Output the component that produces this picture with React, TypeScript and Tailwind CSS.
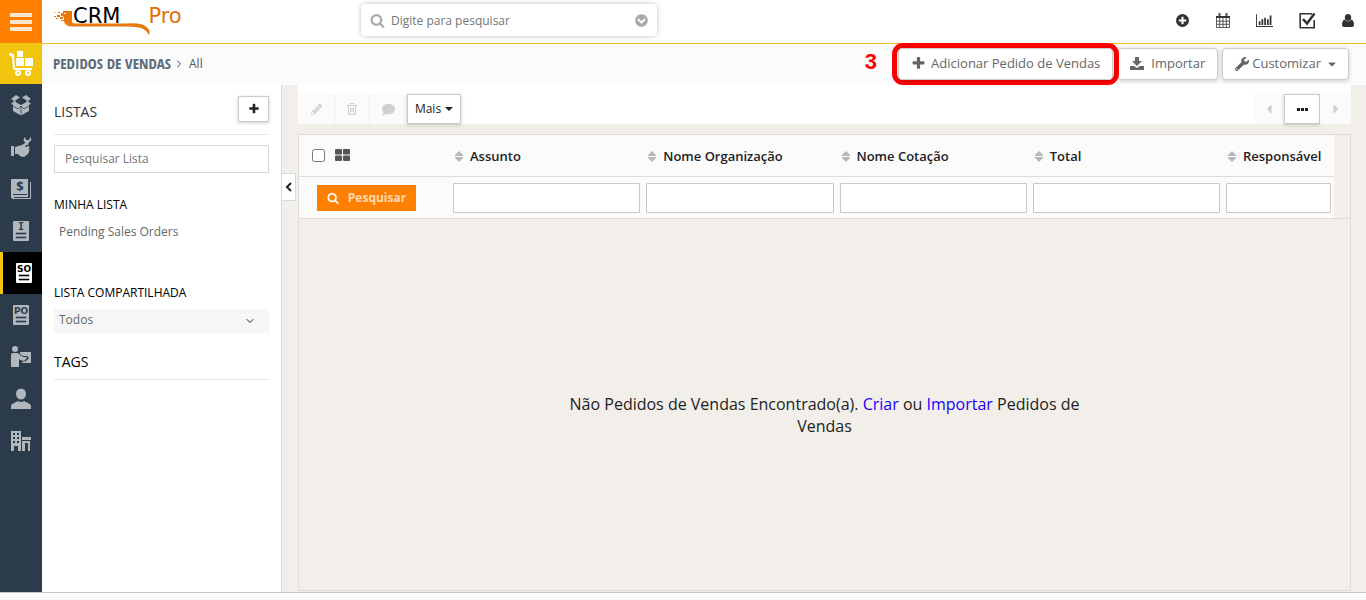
import type { ReactNode } from 'react';
import { FaChevronCircleDown, FaWrench, FaComment, FaPencilAlt, FaCaretLeft, FaCaretRight, FaCaretDown } from 'react-icons/fa';
import { ChevronDown, ChevronRight } from 'lucide-react';

const PLUS =
  'M1600 736v192q0 40-28 68t-68 28h-416v416q0 40-28 68t-68 28h-192q-40 0-68-28t-28-68v-416h-416q-40 0-68-28t-28-68v-192q0-40 28-68t68-28h416v-416q0-40 28-68t68-28h192q40 0 68 28t28 68v416h416q40 0 68 28t28 68z';
const PLUS_CIRCLE =
  'M1344 960v-128q0-26-19-45t-45-19h-256v-256q0-26-19-45t-45-19h-128q-26 0-45 19t-19 45v256h-256q-26 0-45 19t-19 45v128q0 26 19 45t45 19h256v256q0 26 19 45t45 19h128q26 0 45-19t19-45v-256h256q26 0 45-19t19-45zm320-64q0 209-103 385.5t-279.5 279.5-385.5 103-385.5-103-279.5-279.5-103-385.5 103-385.5 279.5-279.5 385.5-103 385.5 103 279.5 279.5 103 385.5z';
const SEARCH =
  'M1216 832q0-185-131.5-316.5t-316.5-131.5-316.5 131.5-131.5 316.5 131.5 316.5 316.5 131.5 316.5-131.5 131.5-316.5zm512 832q0 52-38 90t-90 38q-54 0-90-38l-343-342q-179 124-399 124-143 0-273.5-55.5t-225-150-150-225-55.5-273.5 55.5-273.5 150-225 225-150 273.5-55.5 273.5 55.5 225 150 150 225 55.5 273.5q0 220-124 399l343 343q37 37 37 90z';

function Glyph({ d, className }: { d: string; className: string }) {
  return (
    <svg viewBox="0 0 1792 1792" className={className} fill="currentColor" aria-hidden="true">
      <path d={d} />
    </svg>
  );
}

function Logo() {
  return (
    <svg width="140" height="30" viewBox="0 0 140 30" aria-hidden="true">
      <g fill="#e8780c">
        <path d="M12 3h6v10q0 2.500 3 2.500h52q17-1 21 5q2.500 3 1 6.500q-3-6-10-7.500q-8-1.500-20-1H19q-9 0-9-6V9h-1V6h3z" />
        <rect x="9" y="3" width="3" height="2" />
        <rect x="7" y="5" width="3" height="3" />
        <rect x="4" y="4" width="2" height="1" />
        <rect x="0" y="4" width="1" height="1" />
        <rect x="3" y="7" width="3" height="2" />
        <rect x="0" y="8" width="2" height="1" />
        <rect x="6" y="9" width="3" height="2" />
        <rect x="2" y="10" width="2" height="1" />
        <rect x="7" y="12" width="4" height="1" />
      </g>
    </svg>
  );
}

function CartIcon() {
  return (
    <svg width="26" height="26" viewBox="0 0 26 26" fill="#fff" aria-hidden="true">
      <path d="M1 3q0-2 2-1l2 1q1 0 1 1l1 13h17v2H7q-2 0-2-2L4 6L2 5Q1 4 1 3z" />
      <rect x="9" y="0" width="6" height="6" />
      <rect x="8" y="7" width="8" height="8" />
      <rect x="17" y="7" width="8" height="8" />
      <circle cx="10" cy="22" r="3" />
      <circle cx="20" cy="22" r="3" />
      <circle cx="10" cy="22" r="1" fill="#f1c40f" />
      <circle cx="20" cy="22" r="1" fill="#f1c40f" />
    </svg>
  );
}

function SideSvg({ children }: { children: ReactNode }) {
  return (
    <svg width="22" height="22" viewBox="0 0 22 22" fill="#b0b7bd" aria-hidden="true">
      {children}
    </svg>
  );
}

function DocIcon({ letters, active }: { letters: string; active?: boolean }) {
  const ink = active ? '#000' : '#2c3b49';
  return (
    <SideSvg>
      <rect x="3" y="1" width="16" height="20" rx="1" fill={active ? '#fff' : '#b0b7bd'} />
      <text
        x="11"
        y="10"
        textAnchor="middle"
        fontSize={letters.length > 1 ? 9 : 10}
        fontWeight="700"
        className={letters.length > 1 ? "font-['DejaVu_Sans',sans-serif]" : "font-['DejaVu_Sans_Mono',monospace]"}
        fill={ink}
      >
        {letters}
      </text>
      <path d="M6 13h10v1H6zM6 17h10v1H6z" fill={ink} stroke={ink} strokeWidth=".6" />
    </SideSvg>
  );
}

const modules: { name: string; active?: boolean; icon: ReactNode }[] = [
  {
    name: 'Produtos',
    icon: (
      <SideSvg>
        <path d="M6 1l4 2.500L4.500 7 1 5zM16 1l-4 2.500L17.500 7 21 5z" />
        <path d="M1 9.500L4.500 7.500 11 11l6.500-3.500L21 9.500 19 11v6l-8 4.500L3 17v-6z" />
        <path d="M3 12l5 3 3-3 3 3 5-3M11 12v9" stroke="#2c3b49" strokeWidth=".7" fill="none" />
        <path d="M3.500 6.500h2v2h-2zM16.500 6.500h2v2h-2z" />
      </SideSvg>
    ),
  },
  {
    name: 'Serviços',
    icon: (
      <SideSvg>
        <rect x="1" y="10" width="3" height="10" />
        <path d="M5 11l7-2 3-2q2 0 1 2l-1 2 4-1q1 5-1 8l-4 3q-4 0-6-3H5z" />
        <path d="M15 1q-3 3 0 5l1 3h2l1-3q4-2 1-5l-1 3h-3z" />
      </SideSvg>
    ),
  },
  {
    name: 'Livro de preços',
    icon: (
      <SideSvg>
        <path d="M2 1h16v18H4v1h16V4h1v17H3q-2 0-2-2V2q0-1 1-1z" />
        <rect x="3" y="16" width="14" height="1" fill="#2c3b49" />
        <text x="10" y="13" textAnchor="middle" fontSize="13" fontWeight="700" className="font-['Open_Sans',sans-serif]" fill="#2c3b49">
          $
        </text>
      </SideSvg>
    ),
  },
  { name: 'Faturas', icon: <DocIcon letters="I" /> },
  { name: 'Pedidos de Vendas', active: true, icon: <DocIcon letters="SO" active /> },
  { name: 'Pedidos de Compra', icon: <DocIcon letters="PO" /> },
  {
    name: 'Fornecedores',
    icon: (
      <SideSvg>
        <circle cx="5" cy="3" r="3" />
        <path d="M1 9q0-2 2-2h4q2 0 3 2l3 2h3l1 1-3 3-4-1-1-1v8H1z" />
        <path d="M10 6h11v11h-9v-1l4-1 3-3-2-2h-4l-3-2z" />
      </SideSvg>
    ),
  },
  {
    name: 'Contatos',
    icon: (
      <SideSvg>
        <ellipse cx="11" cy="6" rx="5" ry="5.500" />
        <path d="M1 21v-3q0-2 3-3l4-2q3 2 6 0l4 2q3 1 3 3v3z" />
      </SideSvg>
    ),
  },
  {
    name: 'Organizações',
    icon: (
      <SideSvg>
        <path d="M1 1h10v20H1zM12 7h9v3h-1v11h-2v-8h-3v8h-3z" />
        <path d="M3 3h2v2H3zM7 3h2v2H7zM3 7h2v2H3zM7 7h2v2H7zM3 11h2v2H3zM7 11h2v2H7zM4 16h4v5H4zM12 10h9v1h-9z" fill="#2c3b49" />
      </SideSvg>
    ),
  },
];

const columns = ['Assunto', 'Nome Organização', 'Nome Cotação', 'Total', 'Responsável'];

function SortIcon() {
  return (
    <svg width="8" height="11" viewBox="0 0 8 11" fill="#b7b7b7" aria-hidden="true">
      <path d="M4 0l4 4v1H0V4zM4 11l4-4V6H0v1z" />
    </svg>
  );
}

const iconButton = 'flex items-center justify-center text-[#333]';
const actionButton =
  'flex h-8 items-center rounded border border-[#ccc] bg-white text-[13px] text-[#666] shadow-[0_1px_4px_rgba(0,0,0,0.2)]';

function TopBar() {
  return (
    <header className="flex h-[44px] shrink-0">
      <button aria-label="Menu" className="flex h-[43px] w-[42px] shrink-0 items-center justify-center bg-[#ff8000]">
        <svg width="22" height="18" viewBox="0 0 22 18" fill="#ffe6cc" aria-hidden="true">
          <path d="M0 0h22v4H0zM0 7h22v4H0zM0 14h22v4H0z" />
        </svg>
      </button>
      <div className="flex min-w-0 flex-1 border-b border-[#f1c40f] bg-white">
        <a href="#" aria-label="CRM Pro" className="relative block w-[319px] shrink-0 pt-2 pl-3">
          <Logo />
          <span className="absolute top-[4px] left-[31px] flex gap-7 font-['DejaVu_Sans',sans-serif] text-[21px] leading-6">
            <span className="text-black">CRM</span>
            <span className="text-[#e0700c]">Pro</span>
          </span>
        </a>
        <div className="mt-1 flex h-8 w-[296px] items-center rounded bg-white px-[9px] shadow-[0_0_5px_rgba(0,0,0,0.25)]">
          <Glyph d={SEARCH} className="size-[15px] text-[#aaa]" />
          <input
            aria-label="Digite para pesquisar"
            placeholder="Digite para pesquisar"
            className="ml-[6px] min-w-0 flex-1 pt-px text-[12px] outline-none placeholder:text-[#757575]"
          />
          <FaChevronCircleDown className="size-[13px] text-[#aaa]" />
        </div>
        <nav className="ml-auto flex h-[41px] items-center gap-[26px] pr-3">
          <button aria-label="Criar" className={iconButton}>
            <Glyph d={PLUS_CIRCLE} className="size-[15px]" />
          </button>
          <button aria-label="Calendário" className={iconButton}>
            <svg width="14" height="15" viewBox="0 0 14 15" fill="none" stroke="currentColor" aria-hidden="true">
              <path d="M0 3h14v2H0z" fill="currentColor" stroke="none" />
              <path d="M3 0v4M4 0v4M10 0v4M11 0v4" />
              <path d="M.5 3v11.500h13V3M3.700 5v9M7 5v9M10.300 5v9M1 8.200h12M1 11.300h12" strokeWidth=".8" />
            </svg>
          </button>
          <button aria-label="Relatórios" className={iconButton}>
            <svg width="17" height="15" viewBox="0 0 2048 1792" fill="currentColor" aria-hidden="true">
              <path d="M0 128h110v1430h1938v110H0zM330 1000h210v430H330zM660 740h210v690H660zM990 560h210v870H990zM1320 740h210v690h-210zM1650 300h210v1130h-210z" />
            </svg>
          </button>
          <button aria-label="Tarefas" className={iconButton}>
            <svg width="17" height="17" viewBox="0 0 17 17" fill="none" stroke="currentColor" aria-hidden="true">
              <path d="M13 1.800H1.200v14h14V8" strokeWidth="1.600" />
              <path d="M4 7l4 4.500L15.500 1.500" strokeWidth="2.600" />
            </svg>
          </button>
          <button aria-label="Usuário" className={iconButton}>
            <svg width="12" height="13" viewBox="0 0 12 13" fill="currentColor" aria-hidden="true">
              <ellipse cx="6" cy="3.500" rx="3.200" ry="3.500" />
              <path d="M2.500 5.500Q6 9.500 9.500 5.500 12 6.500 12 11q0 2-2 2H2q-2 0-2-2 0-4.500 2.500-5.500z" />
            </svg>
          </button>
        </nav>
      </div>
    </header>
  );
}

function SubHeader() {
  return (
    <div className="flex h-[41px] shrink-0 items-center bg-[#fbfbfb] pr-[17px] pb-[2px] pl-[11px]">
      <h1 className="font-['Open_Sans_Condensed','Liberation_Sans_Narrow',sans-serif] text-[15px] font-light text-[#5b6a78]">PEDIDOS DE VENDAS</h1>
      <ChevronRight className="ml-[2px] size-3 text-[#444]" />
      <span className="ml-1 text-[12px] text-[#555]">All</span>
      <div className="ml-auto flex items-center">
        <span className="mr-[15px] pb-1 font-['Liberation_Sans',sans-serif] text-[22px] font-bold text-[#f00]">3</span>
        <span className="relative z-10 -my-1 -mr-px rounded-[11px] border-[5px] border-[#f00] bg-white px-px">
          <button className={`${actionButton} px-3`}>
            <Glyph d={PLUS} className="mr-[5px] size-[15px]" />
            Adicionar Pedido de Vendas
          </button>
        </span>
        <button className={`${actionButton} pr-3 pl-[11px]`}>
          <svg width="14" height="14" viewBox="0 0 14 14" fill="currentColor" className="mr-[7px]" aria-hidden="true">
            <path d="M5 0h4v4h3L7 9 2 4h3zM0 9h4l3 2 3-2h4v4H0z" />
          </svg>
          Importar
        </button>
        <button className={`${actionButton} ml-1 pr-[10px] pl-3`}>
          <FaWrench className="mr-[3px] size-[14px]" />
          Customizar
          <FaCaretDown className="ml-[5px] size-[12px]" />
        </button>
      </div>
    </div>
  );
}

function ListPanel() {
  return (
    <aside className="w-[240px] shrink-0 border-r border-[#d8d8d8] bg-white px-3 pt-[11px]">
      <div className="flex h-[39px] items-start justify-between border-b border-[#e8e8e8]">
        <h2 className="pt-[5px] text-[14px] leading-[22px] text-[#333]">LISTAS</h2>
        <button aria-label="Adicionar lista" className="flex h-[26px] w-[31px] items-center justify-center border border-[#ccc] bg-white text-[#222] shadow-[0_1px_3px_rgba(0,0,0,0.2)]">
          <Glyph d={PLUS} className="size-3" />
        </button>
      </div>
      <input
        aria-label="Pesquisar Lista"
        placeholder="Pesquisar Lista"
        className="mt-[10px] block h-7 w-full border border-[#d8d8d8] px-[10px] pb-[2px] text-[12px] outline-none placeholder:text-[#757575]"
      />
      <h3 className="mt-[22px] text-[12px] leading-5 text-black">MINHA LISTA</h3>
      <a href="#" className="mt-[7px] block pl-[5px] text-[12px] leading-5 text-[#666]">Pending Sales Orders</a>
      <h3 className="mt-[41px] text-[12px] leading-5 text-black">LISTA COMPARTILHADA</h3>
      <div className="relative mt-[6px]">
        <select aria-label="Lista compartilhada" className="block h-6 w-full appearance-none bg-[#f6f6f6] px-[5px] pb-[2px] text-[12px] text-[#666] outline-none">
          <option>Todos</option>
        </select>
        <ChevronDown className="pointer-events-none absolute top-[6px] right-[13px] size-3 text-[#222]" />
      </div>
      <h3 className="mt-[18px] h-[29px] border-b border-[#e8e8e8] text-[14px] leading-[22px] text-black">TAGS</h3>
    </aside>
  );
}

const disabledTool = 'flex h-[30px] items-center justify-center bg-[#fbfbfb] text-[#d0d0d0]';
const liveTool =
  'flex h-[30px] items-center justify-center border border-[#c8c8c8] bg-white text-[#222] shadow-[0_1px_4px_rgba(0,0,0,0.2)]';

function Toolbar() {
  return (
    <div className="flex h-[39px] items-end justify-between bg-white">
      <div className="flex">
        <button disabled aria-label="Editar" className={`${disabledTool} w-[37px] border-r border-[#f0f0f0]`}>
          <FaPencilAlt className="size-[11px]" />
        </button>
        <button disabled aria-label="Excluir" className={`${disabledTool} w-[35px] border-r border-[#f0f0f0]`}>
          <svg width="10" height="12" viewBox="0 0 10 12" fill="none" stroke="currentColor" aria-hidden="true">
            <path d="M0 2.500h10M3 2V.500h4V2M1.500 3v8.500h7V3M3.500 4.500v5M5 4.500v5M6.500 4.500v5" />
          </svg>
        </button>
        <button disabled aria-label="Comentar" className={`${disabledTool} w-[37px]`}>
          <FaComment className="size-[13px]" />
        </button>
        <button className={`${liveTool} w-[54px] gap-1 text-[12px]`}>
          Mais
          <svg width="8" height="4" viewBox="0 0 8 4" fill="currentColor" aria-hidden="true">
            <path d="M0 0h8L4 4z" />
          </svg>
        </button>
      </div>
      <div className="flex">
        <button disabled aria-label="Anterior" className={`${disabledTool} w-[30px]`}>
          <FaCaretLeft className="size-[14px]" />
        </button>
        <button aria-label="Página" className={`${liveTool} w-[36px]`}>
          <svg width="11" height="3" viewBox="0 0 11 3" fill="currentColor" aria-hidden="true">
            <path d="M0 0h3v3H0zM4 0h3v3H4zM8 0h3v3H8z" />
          </svg>
        </button>
        <button disabled aria-label="Próxima" className={`${disabledTool} w-[31px]`}>
          <FaCaretRight className="size-[14px]" />
        </button>
      </div>
    </div>
  );
}

function Records() {
  return (
    <div className="mt-[10px] mb-[1px] flex flex-1 flex-col border border-[#dcdcdc]">
      <div className="border-b border-[#dcdcdc] pr-4">
        <table className="w-full table-fixed border-collapse bg-[#fbfbfb] text-[13px]">
          <colgroup>
            <col className="w-[151px]" />
            <col />
            <col />
            <col />
            <col />
            <col className="w-[111px]" />
          </colgroup>
          <thead>
            <tr className="h-[41px] border-b border-[#dcdcdc]">
              <th className="p-0">
                <div className="flex items-center gap-[10px] pl-[13px]">
                  <input type="checkbox" aria-label="Selecionar todos" className="size-[13px]" />
                  <svg width="15" height="12" viewBox="0 0 15 12" fill="#555" aria-hidden="true">
                    <rect width="7" height="5.500" rx="1" />
                    <rect x="8" width="7" height="5.500" rx="1" />
                    <rect y="6.500" width="7" height="5.500" rx="1" />
                    <rect x="8" y="6.500" width="7" height="5.500" rx="1" />
                  </svg>
                </div>
              </th>
              {columns.map((name) => (
                <th key={name} className="p-0 text-left font-semibold whitespace-nowrap text-[#222]">
                  <a href="#" className="flex items-center gap-[7px] pt-[2px] pl-[5px]">
                    <SortIcon />
                    {name}
                  </a>
                </th>
              ))}
            </tr>
          </thead>
          <tbody>
            <tr className="h-[42px]">
              <td className="p-0 pt-[2px] pl-[18px]">
                <button className="flex h-[26px] w-[99px] items-center justify-center gap-[9px] bg-[#ff8000] text-[12px] font-bold text-[#ffd9b3]">
                  <Glyph d={SEARCH} className="size-3 text-white" />
                  Pesquisar
                </button>
              </td>
              {columns.map((name) => (
                <td key={name} className="px-[3px] pt-[2px] pb-0">
                  <input aria-label={name} className="block h-[30px] w-full rounded-[1px] border border-[#c8c8c8] bg-white px-2 outline-none" />
                </td>
              ))}
            </tr>
          </tbody>
        </table>
      </div>
      <div className="flex flex-1 items-center justify-center pb-[1px]">
        <p className="w-1/2 pt-[22px] text-center text-[16px] leading-[22px] text-[#222]">
          Não Pedidos de Vendas Encontrado(a).{' '}
          <a href="#" className="text-[#1a00ff]">Criar</a> ou <a href="#" className="text-[#1a00ff]">Importar</a> Pedidos de Vendas
        </p>
      </div>
    </div>
  );
}

export default function App() {
  return (
    <div className="flex min-h-screen flex-col bg-[#f2efea] font-['Open_Sans',sans-serif]">
      <TopBar />
      <div className="flex flex-1">
        <nav aria-label="Módulos" className="-mt-px flex w-[42px] shrink-0 flex-col bg-[#2c3b49]">
          <a href="#" aria-label="Vendas" className="flex h-[41px] items-center justify-center bg-[#f1c40f]">
            <CartIcon />
          </a>
          {modules.map((m) => (
            <a
              key={m.name}
              href="#"
              aria-label={m.name}
              className={`flex h-[42px] items-center justify-center ${m.active ? 'border-l-[3px] border-[#f1c40f] bg-black pl-[3px]' : ''}`}
            >
              {m.icon}
            </a>
          ))}
        </nav>
        <div className="flex min-w-0 flex-1 flex-col">
          <SubHeader />
          <div className="flex flex-1">
            <ListPanel />
            <div className="w-4 shrink-0 pt-[88px]">
              <button aria-label="Recolher painel" className="flex h-7 w-[14px] items-center justify-center border border-l-0 border-[#d8d8d8] bg-white text-[#222]">
                <svg width="7" height="10" viewBox="0 0 7 10" fill="none" stroke="currentColor" strokeWidth="2" aria-hidden="true">
                  <path d="M6 1L2 5l4 4" />
                </svg>
              </button>
            </div>
            <main className="mr-[15px] flex min-w-0 flex-1 flex-col">
              <Toolbar />
              <Records />
            </main>
          </div>
        </div>
      </div>
      <footer className="h-2 shrink-0 border-t border-[#c4c4c4] bg-[#fbfbfb]" />
    </div>
  );
}
